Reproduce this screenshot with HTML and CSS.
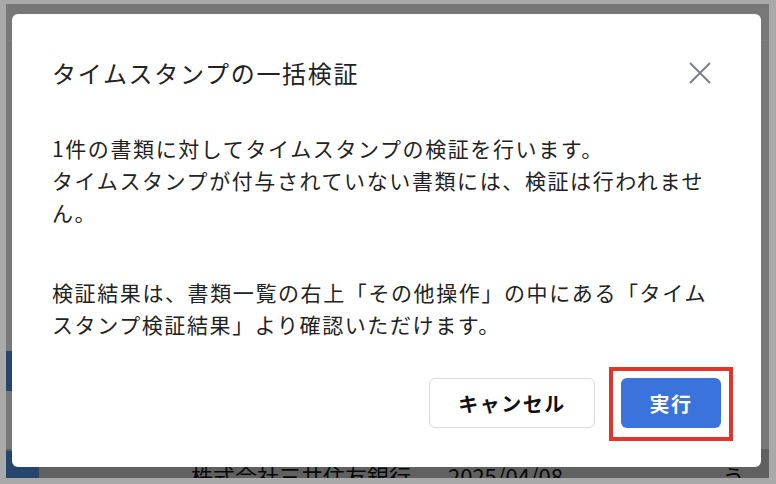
FILE: index.html
```html
<!DOCTYPE html>
<html lang="ja">
<head>
    <meta charset="UTF-8">
    <meta name="viewport" content="width=device-width, initial-scale=1.0">
    <title>タイムスタンプの一括検証</title>

    <link rel="stylesheet" href="styles.css">
</head>
<body>
<div class="screen">

    <!-- 後ろの書類一覧（オーバーレイで暗くなる） -->
    <div class="page">
        <div class="page-head"></div>
        <div class="doc-row"></div>
        <div class="doc-row"></div>
        <div class="doc-row"></div>
        <div class="doc-row">
            <span class="tag"></span>
            <span class="doc-misc low">う</span>
        </div>
        <div class="doc-row dark">
            <span class="tag"></span>
            <span class="doc-name">株式会社三井住友銀行</span>
            <span class="doc-date">2025/04/08</span>
            <span class="doc-misc">うう</span>
        </div>
    </div>

    <div class="backdrop"></div>

    <!-- モーダル -->
    <div class="dialog-layer">
        <div class="dialog">
            <div class="dialog-head">
                <h2 class="dialog-title">タイムスタンプの一括検証</h2>
                <button class="close-btn" type="button" aria-label="閉じる">
                    <svg width="22" height="22" viewBox="0 0 22 22">
                        <path d="M1 1 L21 21 M21 1 L1 21" stroke="#7b8187" stroke-width="2" fill="none"/>
                    </svg>
                </button>
            </div>
            <div class="dialog-body">
                <p>1件の書類に対してタイムスタンプの検証を行います。<br>タイムスタンプが付与されていない書類には、検証は行われません。</p>
                <p class="second">検証結果は、書類一覧の右上「その他操作」の中にある「タイムスタンプ検証結果」より確認いただけます。</p>
            </div>
            <div class="dialog-foot">
                <button class="btn btn-cancel" type="button">キャンセル</button>
                <span class="mark">
                    <button class="btn btn-run" type="button">実行</button>
                </span>
            </div>
        </div>
    </div>

</div>
</body>
</html>
```

FILE: styles.css
```css
body {
    margin: 0;
    background-color: #a9a9a9;
    font-family: "Noto Sans CJK JP", "Noto Sans", sans-serif;
    color: #222;
}

.screen {
    margin: 4px 7px 6px 6px;
    height: 474px;
    display: grid;
    overflow: hidden;
}

.page, .backdrop, .dialog-layer {
    grid-area: 1 / 1;
}

/* 書類一覧 */
.page {
    background-color: #f0f0f0;
}

.page-head {
    height: 36px;
    border-bottom: 1px solid #fafafa;
}

.doc-row {
    height: 100px;
    display: flex;
    align-items: flex-start;
    padding-top: 2px;
    box-sizing: border-box;
    font-size: 22px;
    line-height: 48px;
    color: #111;
}

.doc-row:nth-child(2) {
    height: 108px;
}

.doc-row.dark {
    background-color: #c0c0c0;
}

.tag {
    width: 34px;
    height: 40px;
    border-radius: 0 4px 4px 0;
    background-color: #4b8ad8;
}

.doc-name {
    margin-left: 152px;
    width: 265px;
}

.doc-date {
    width: 283px;
}

.doc-misc {
    letter-spacing: 2px;
}

.doc-misc.low {
    margin-left: 700px;
    margin-top: 30px;
}

.backdrop {
    background-color: rgba(0, 0, 0, 0.5);
}

.dialog-layer {
    padding: 10px 8px 0 6px;
}

.dialog {
    background-color: #fff;
    border-radius: 6px;
}

.dialog-head {
    display: flex;
    align-items: center;
    justify-content: space-between;
    padding: 38px 40px 0 40px;
}

.dialog-title {
    margin: 0;
    font-size: 24px;
    font-weight: normal;
    line-height: 30px;
    letter-spacing: 1.7px;
}

.close-btn {
    width: 42px;
    height: 42px;
    padding: 0;
    border: none;
    background: none;
    display: flex;
    align-items: center;
    justify-content: center;
}

.dialog-body {
    padding: 0 40px;
    margin-top: 38px;
    font-size: 21px;
    line-height: 32px;
    letter-spacing: 1.6px;
}

.dialog-body p {
    margin: 0;
}

.dialog-body p.second {
    margin-top: 48px;
}

.dialog-foot {
    display: flex;
    justify-content: flex-end;
    align-items: center;
    gap: 14px;
    padding: 38px 40px 39px 40px;
}

.btn {
    height: 50px;
    border-radius: 6px;
    font-family: inherit;
    font-size: 20px;
    font-weight: bold;
    letter-spacing: 1.5px;
    cursor: pointer;
}

.btn-cancel {
    width: 166px;
    background-color: #fff;
    border: 1.5px solid #d6dadd;
    color: #111;
}

/* 赤枠の注釈 */
.mark {
    display: flex;
    border: 4px solid #e3332a;
    padding: 7px 8px 9px 8px;
    margin: -11px -12px -13px 0;
}

.btn-run {
    width: 100px;
    background-color: #3a73db;
    border: none;
    color: #fff;
}
```
